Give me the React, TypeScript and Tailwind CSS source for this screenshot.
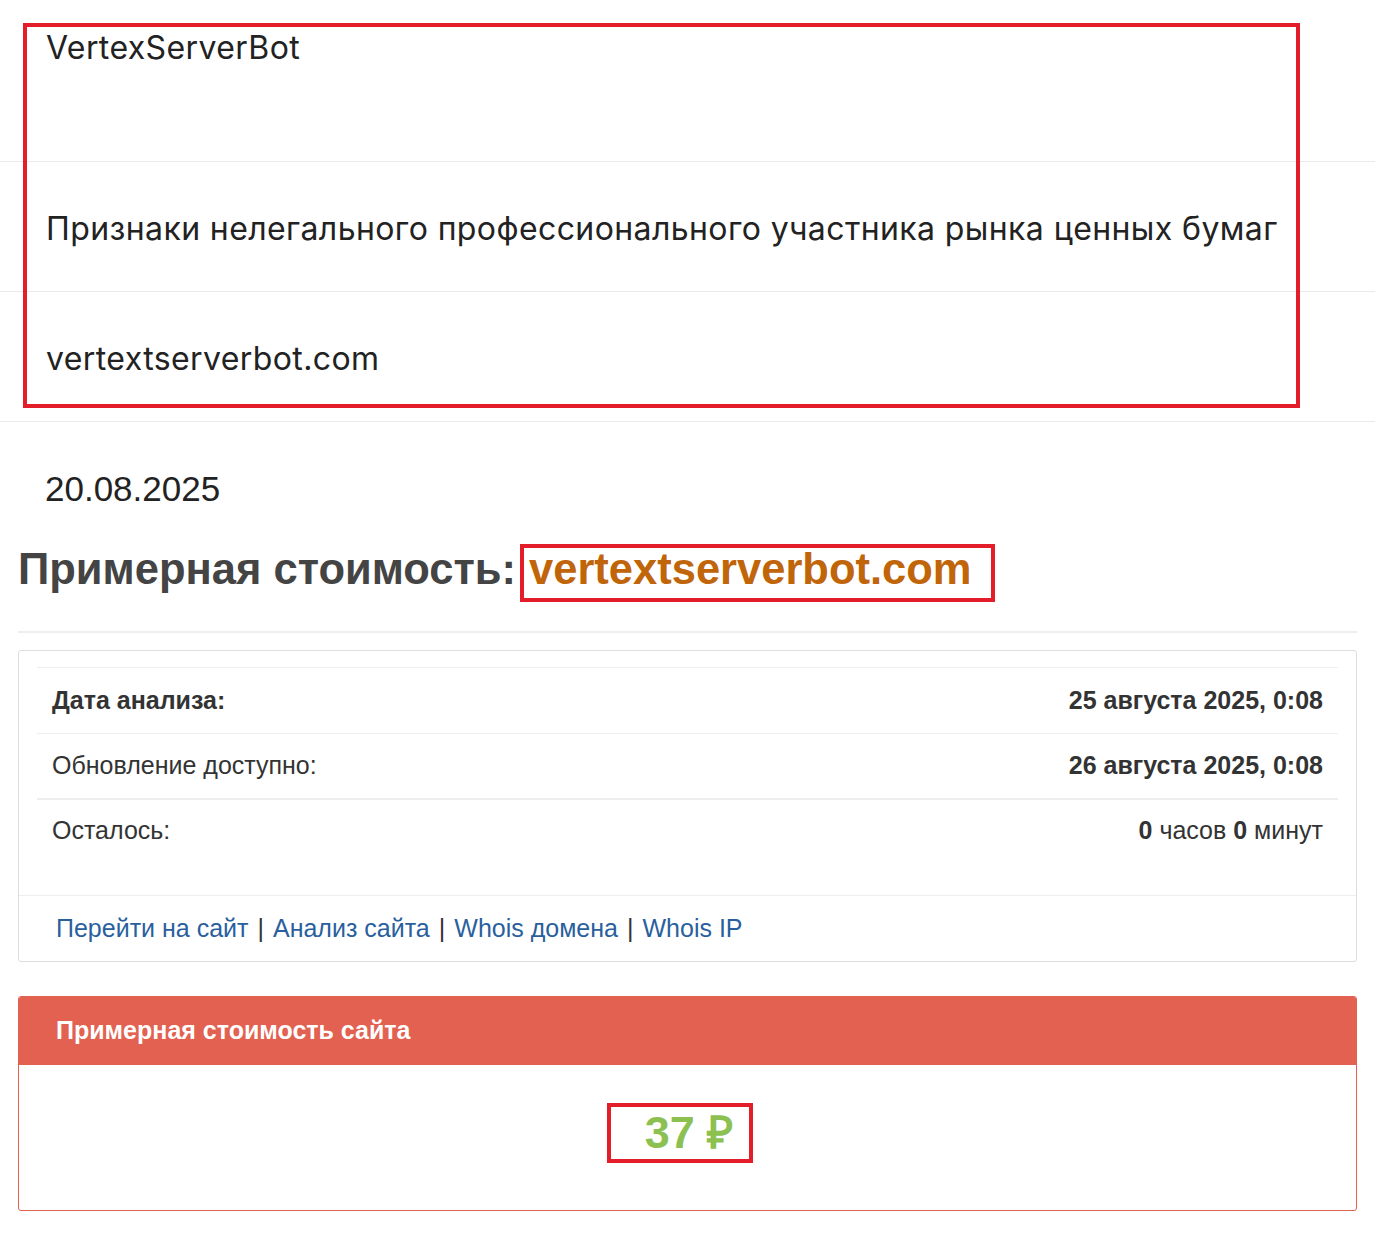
import React from "react";

const top = { fontFamily: "Inter, 'Noto Sans', sans-serif" };
const arial = { fontFamily: "'Liberation Sans', Arial, sans-serif" };

export default function App() {
  return (
    <div className="w-[1375px] min-h-[1238px] bg-white text-[#222]">
      <div className="relative tracking-[0.4px]" style={top}>
        <div className="h-[162px] border-b border-[#eaeaea] pl-[46px] pt-[27px]">
          <div className="text-[32px] leading-[42px]">VertexServerBot</div>
        </div>
        <div className="h-[130px] border-b border-[#eaeaea] pl-[46px] flex items-center">
          <div className="text-[32px] leading-[42px] pt-[4px]">Признаки нелегального профессионального участника рынка ценных бумаг</div>
        </div>
        <div className="h-[130px] border-b border-[#eaeaea] pl-[46px] flex items-center">
          <div className="text-[32px] leading-[42px] pt-[4px]">vertextserverbot.com</div>
        </div>
        <div className="absolute left-[23px] top-[23px] w-[1277px] h-[385px] border-[4px] border-[#e31e2a] pointer-events-none" />
      </div>

      <div style={arial} className="px-[18px]">
        <div className="pl-[27px] pt-[47px] text-[35px] leading-[40px] text-[#222]">20.08.2025</div>
        <div className="mt-[30px] flex items-center h-[60px]">
          <span className="text-[43.5px] font-bold text-[#444] leading-[48px]">Примерная стоимость:</span>
          <span className="relative ml-[13px] inline-block">
            <span className="text-[43.5px] font-bold text-[#c0650a] leading-[48px]">vertextserverbot.com</span>
            <span className="absolute left-[-9px] top-[-1px] w-[475px] h-[58px] border-[4px] border-[#e31e2a]" />
          </span>
        </div>
        <div className="mt-[32px] h-[2px] bg-[#eeeeee]" />

        <div className="mt-[17px] border border-[#dddddd] rounded-[3px]">
          <div className="px-[18px] pt-[16px]">
            <div className="border-t border-[#eeeeee] h-[66px] flex items-center justify-between px-[15px] text-[25px] text-[#333]">
              <span className="font-bold">Дата анализа:</span>
              <span className="font-bold">25 августа 2025, 0:08</span>
            </div>
            <div className="border-t border-[#eeeeee] h-[65px] flex items-center justify-between px-[15px] text-[25px] text-[#333]">
              <span>Обновление доступно:</span>
              <span className="font-bold">26 августа 2025, 0:08</span>
            </div>
            <div className="border-t-2 border-[#eeeeee] h-[64px] flex items-center justify-between px-[15px] text-[25px] text-[#333]">
              <span>Осталось:</span>
              <span><b>0</b> часов <b>0</b> минут</span>
            </div>
          </div>
          <div className="mt-[33px] border-t border-[#eeeeee] h-[66px] flex items-center px-[37px] text-[25px] text-[#2a5f9e]">
            <span>Перейти на сайт</span>
            <span className="text-[#333] mx-[9px]">|</span>
            <span>Анализ сайта</span>
            <span className="text-[#333] mx-[9px]">|</span>
            <span>Whois домена</span>
            <span className="text-[#333] mx-[9px]">|</span>
            <span>Whois IP</span>
          </div>
        </div>

        <div className="mt-[34px] border border-[#e36150] rounded-[3px] overflow-hidden">
          <div className="bg-[#e36150] h-[68px] flex items-center px-[37px] text-white font-bold text-[25px]">
            Примерная стоимость сайта
          </div>
          <div className="h-[145px] flex items-center justify-center">
            <div className="relative mr-[18px] pl-[38px] pr-[17px] mb-[10px]">
              <span className="text-[45px] font-bold text-[#8cc152] leading-[48px]">37 ₽</span>
              <span className="absolute left-[0px] top-[-6px] w-[146px] h-[60px] border-[4px] border-[#e31e2a]" />
            </div>
          </div>
        </div>
      </div>
    </div>
  );
}
